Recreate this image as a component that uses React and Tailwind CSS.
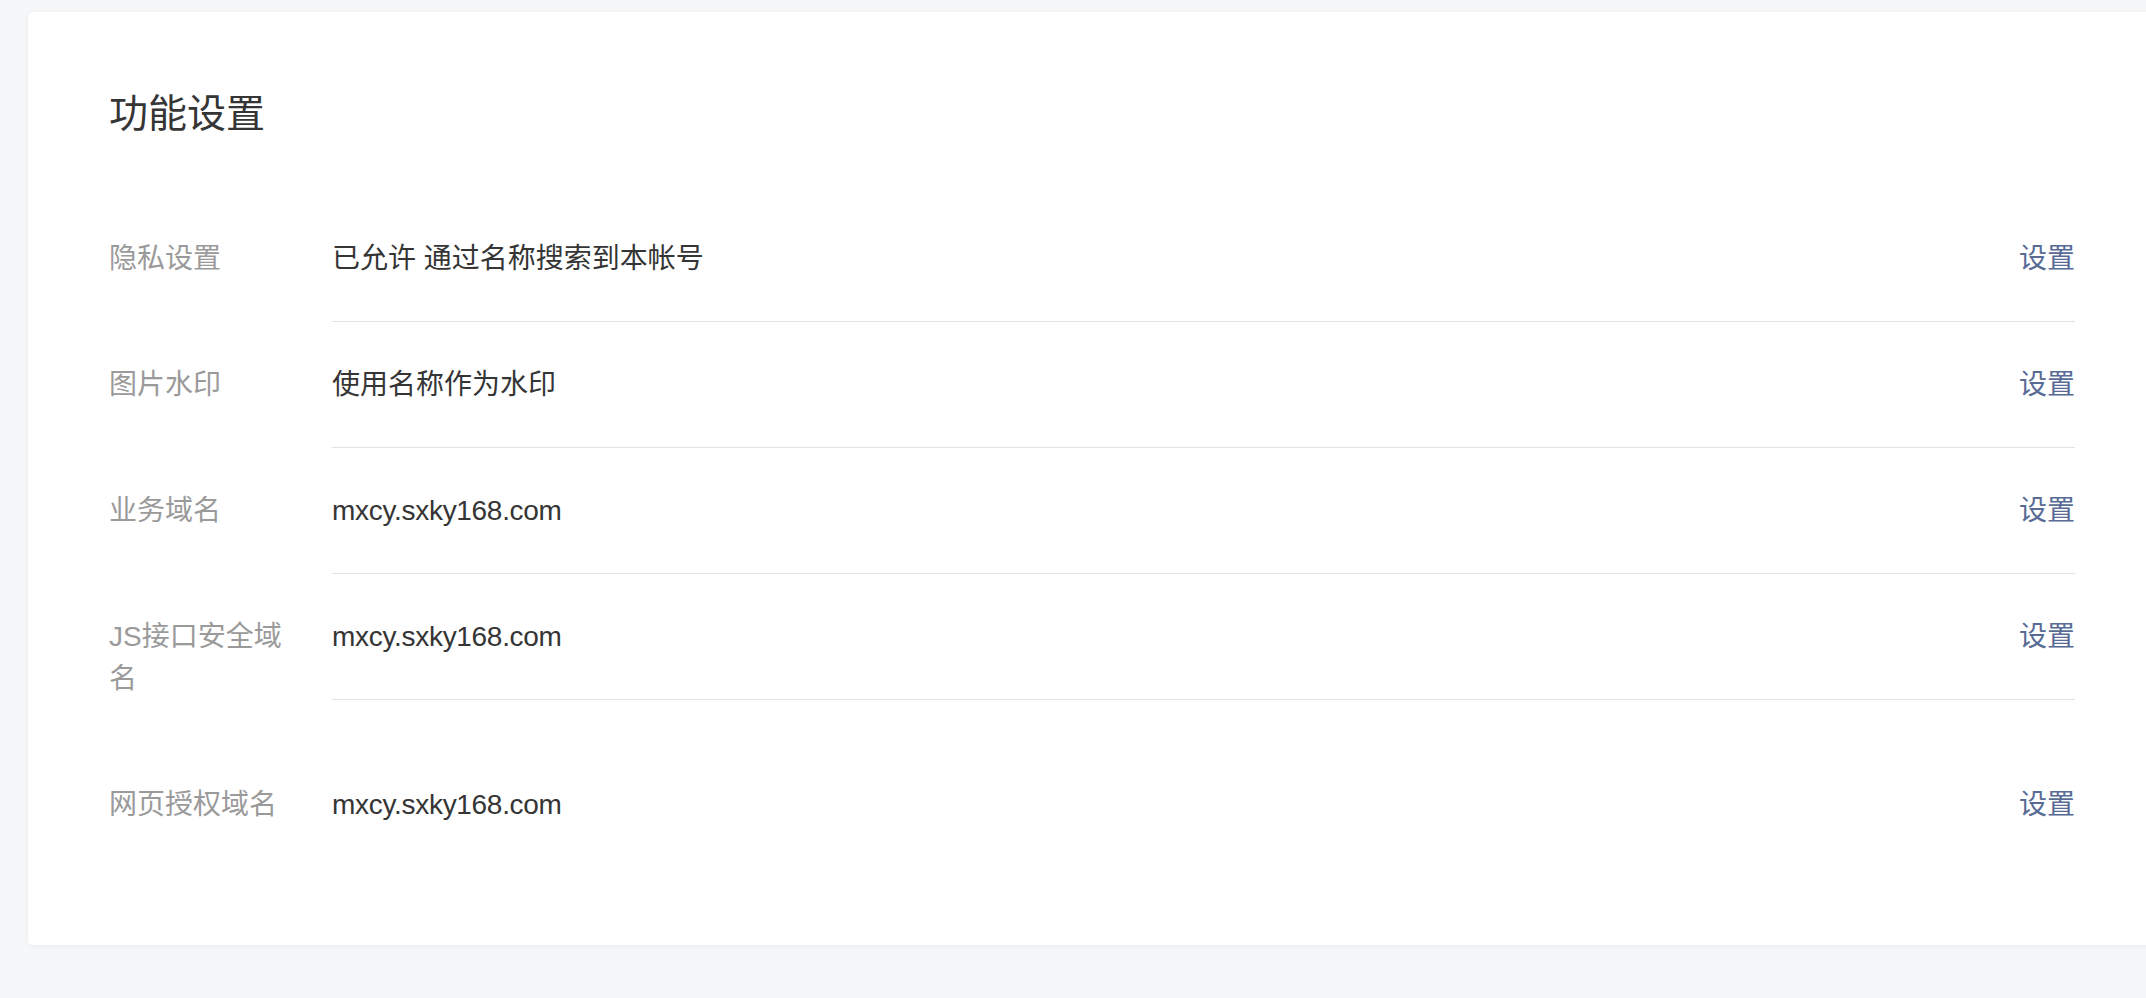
const rows = [
  { label: '隐私设置', value: '已允许 通过名称搜索到本帐号' },
  { label: '图片水印', value: '使用名称作为水印' },
  { label: '业务域名', value: 'mxcy.sxky168.com', latin: true },
  { label: 'JS接口安全域名', value: 'mxcy.sxky168.com', latin: true },
  { label: '网页授权域名', value: 'mxcy.sxky168.com', latin: true, last: true },
];

const SettingRow = ({ label, value, latin, last }) => (
  <div className="flex items-start">
    <div className="w-[180px] mr-[43px] shrink-0 py-[42px] leading-[42px] text-[#9a9a9a] break-all">
      {label}
    </div>
    <div
      className={
        'flex-1 flex items-center justify-between pt-[42px] leading-[42px] ' +
        (last ? 'pb-[42px]' : 'pb-[41px] border-b border-[#e0e2e6]')
      }
    >
      <span className={latin ? 'text-[#353535] tracking-[-0.3px]' : 'text-[#353535]'}>{value}</span>
      <a href="#" className="text-[#576b95]">设置</a>
    </div>
  </div>
);

export default function App() {
  return (
    <div
      className="min-h-[998px] bg-[#f6f7f9] pt-[12px] pl-[28px] overflow-hidden"
      style={{ fontFamily: '"Liberation Sans", "Noto Sans CJK SC", sans-serif' }}
    >
      <div className="w-[2160px] h-[933px] bg-white rounded-[5px] shadow-[0_1px_6px_rgba(0,0,0,0.05)] pl-[81px] pt-[74px]">
        <div className="w-[1966px]">
          <h1 className="text-[39px] leading-[56px] text-[#353535] mb-[54px]">功能设置</h1>
          <div className="text-[28px]">
            {rows.map((r) => (
              <SettingRow key={r.label} {...r} />
            ))}
          </div>
        </div>
      </div>
    </div>
  );
}
